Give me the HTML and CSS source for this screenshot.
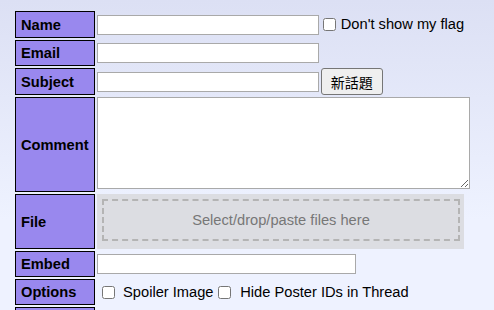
FILE: index.html
```html
<!DOCTYPE html>
<html lang="en">
  <head>
    <meta charset="UTF-8" />
    <meta name="viewport" content="width=device-width, initial-scale=1.0" />
    <title>Post form</title>
    <link rel="stylesheet" href="styles.css">
  </head>
  <body>
    <form class="post-form">
      <table class="post-table">
        <tr>
          <th>Name</th>
          <td>
            <input type="text" class="field field-name" />
            <label class="check flag"><input type="checkbox" /> Don't show my flag</label>
          </td>
        </tr>
        <tr>
          <th>Email</th>
          <td><input type="text" class="field field-name" /></td>
        </tr>
        <tr>
          <th>Subject</th>
          <td>
            <input type="text" class="field field-name" />
            <button type="button" class="submit">新話題</button>
          </td>
        </tr>
        <tr>
          <th>Comment</th>
          <td><textarea class="comment"></textarea></td>
        </tr>
        <tr>
          <th>File</th>
          <td>
            <div class="dropzone">
              <div class="dropzone-inner">Select/drop/paste files here</div>
            </div>
          </td>
        </tr>
        <tr>
          <th>Embed</th>
          <td><input type="text" class="field field-embed" /></td>
        </tr>
        <tr>
          <th>Options</th>
          <td class="options">
            <label class="check spoiler"><input type="checkbox" /> Spoiler Image</label>
            <label class="check hide-ids"><input type="checkbox" /> Hide Poster IDs in Thread</label>
          </td>
        </tr>
        <tr>
          <th>&nbsp;</th>
          <td></td>
        </tr>
      </table>
    </form>
  </body>
</html>
```

FILE: styles.css
```css
/* post form */
body {
  margin: 0;
  font-family: "Liberation Sans", Arial, sans-serif;
  font-size: 11pt;
  color: #000;
  background: #eef2ff linear-gradient(#dce0f4, #eef2ff 220px) no-repeat;
  min-height: 310px;
}

.post-form {
  padding: 9px 0 0 13px;
}

.post-table {
  border-spacing: 2px;
}

.post-table th {
  width: 68px;
  height: 24px;
  padding: 0 5px;
  border: 1px solid #000;
  background: #9988ee;
  text-align: left;
}

.post-table td {
  padding: 0;
  font-size: 10pt;
  line-height: 1;
  vertical-align: middle;
}

.field {
  height: 20px;
  margin: 0;
  padding: 1px 2px;
  border: 1px solid #a9a9a9;
  box-sizing: border-box;
  font: inherit;
  vertical-align: middle;
}

.field-name {
  width: 222px;
}

.field-embed {
  width: 259px;
}

.check {
  font-size: 11pt;
  vertical-align: middle;
}

.check.flag {
  line-height: 27px;
}

.check input {
  margin: 0 1px 0 0;
  vertical-align: -2px;
}

.submit {
  height: 27px;
  margin: 0 0 0 -2px;
  padding: 1px 9px;
  font-family: "Noto Sans CJK TC", sans-serif;
  font-size: 14px;
  background: #efefef;
  border: 1px solid #767676;
  border-radius: 3px;
  vertical-align: middle;
}

.comment {
  display: block;
  width: 373px;
  height: 92px;
  margin: 0 0 3px;
  border: 1px solid #a9a9a9;
  box-sizing: border-box;
}

.dropzone {
  width: 367px;
  height: 55px;
  padding: 5px 4px 8px 5px;
  box-sizing: border-box;
  background: #dcdde2;
}

.dropzone-inner {
  height: 100%;
  box-sizing: border-box;
  border: 2px dashed #b4b4b4;
  color: #777;
  font-size: 11pt;
  display: flex;
  align-items: center;
  justify-content: center;
}

.options .spoiler input {
  margin: 0 4px 0 5px;
}

.options .hide-ids input {
  margin: 0 5px 0 1px;
}
```
